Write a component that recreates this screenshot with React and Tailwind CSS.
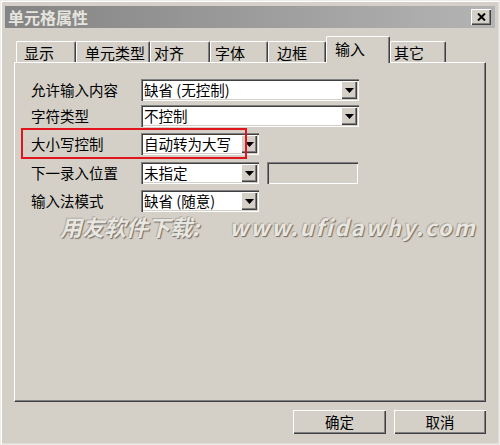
import React from "react";

const FONT = "font-['Noto_Sans_CJK_SC','Noto_Sans',sans-serif]";

function Arrow() {
  return (
    <div className="w-[16px] h-[18px] bg-[#d4d0c8] flex items-center justify-center shadow-[inset_1px_1px_0_#ffffff,inset_-1px_-1px_0_#404040,inset_-2px_-2px_0_#808080]">
      <svg width="9" height="5" viewBox="0 0 9 5">
        <path d="M0 0 H9 L4.5 5 Z" fill="#000" />
      </svg>
    </div>
  );
}

function Combo({ value, wide }) {
  return (
    <div
      className={`${wide ? "w-[218px]" : "w-[118px]"} h-[22px] bg-white flex items-center justify-between pl-[3px] pr-[2px] shadow-[inset_1px_1px_0_#808080,inset_2px_2px_0_#404040,inset_-1px_-1px_0_#ffffff,inset_-2px_-2px_0_#d4d0c8]`}
    >
      <span className="text-[14.5px] leading-none text-black whitespace-nowrap">{value}</span>
      <Arrow />
    </div>
  );
}

function Row({ label, children, className }) {
  return (
    <div className={`flex items-center ${className}`}>
      <span className="w-[110px] text-[14.5px] leading-none text-black whitespace-nowrap">{label}</span>
      {children}
    </div>
  );
}

const tabs = [
  { name: "显示", cls: "w-[60px] pl-[7px]" },
  { name: "单元类型", cls: "w-[74px] pl-[8px]" },
  { name: "对齐", cls: "w-[60px] pl-[3px]" },
  { name: "字体", cls: "w-[58px] pl-[4px]" },
  { name: "边框", cls: "w-[58px] pl-[8px]" },
  { name: "输入", cls: "w-[64px] pl-[8px]", active: true },
  { name: "其它", cls: "w-[56px] pl-[3px]" },
];

export default function App() {
  return (
    <div className={`w-[500px] h-[445px] bg-[#d4d0c8] px-[4px] pt-[5px] ${FONT} border border-[#eeece8] shadow-[inset_1px_1px_0_#ffffff,inset_-1px_-1px_0_#e0ddd6]`}>
      {/* title bar */}
      <div className="h-[22px] flex items-center justify-between pl-[3px] pr-[4px] bg-gradient-to-r from-[#848484] to-[#b4b4b4]">
        <span className="text-[16px] font-bold leading-none text-[#e6e4de]">单元格属性</span>
        <div className="w-[20px] h-[16px] bg-[#d4d0c8] flex items-center justify-center shadow-[inset_1px_1px_0_#ffffff,inset_-1px_-1px_0_#404040,inset_-2px_-2px_0_#808080]">
          <svg width="9" height="8" viewBox="0 0 9 8">
            <path d="M1 0.5 L8 7.5 M8 0.5 L1 7.5" stroke="#000" strokeWidth="2" />
          </svg>
        </div>
      </div>

      {/* tabs */}
      <div className="mt-[8px] ml-[11px] h-[26px] flex items-end relative z-10">
        {tabs.map((t) =>
          t.active ? (
            <div
              key={t.name}
              className={`${t.cls} h-[27px] -mb-[1px] bg-[#d4d0c8] rounded-t-[2px] border-t border-l border-white border-r border-r-[#404040] shadow-[inset_-1px_0_0_#808080] flex items-start pt-[3px] text-[15px] leading-[18px] text-black`}
            >
              {t.name}
            </div>
          ) : (
            <div
              key={t.name}
              className={`${t.cls} h-[21px] bg-[#d4d0c8] rounded-t-[2px] border-t border-l border-white border-r border-r-[#404040] shadow-[inset_-1px_0_0_#808080] flex items-center text-[15px] leading-none text-black`}
            >
              {t.name}
            </div>
          )
        )}
      </div>

      {/* panel */}
      <div className="relative mx-[9px] h-[340px] border-t border-l border-white border-r border-b border-r-[#404040] border-b-[#404040] shadow-[inset_-1px_-1px_0_#808080] pt-[16px] pl-[16px]">
        <Row label="允许输入内容">
          <Combo value="缺省 (无控制)" wide />
        </Row>
        <Row label="字符类型" className="mt-[4px]">
          <Combo value="不控制" wide />
        </Row>
        <Row label="大小写控制" className="mt-[6px]">
          <Combo value="自动转为大写" />
        </Row>
        <Row label="下一录入位置" className="mt-[7px]">
          <Combo value="未指定" />
          <div className="ml-[8px] w-[91px] h-[22px] bg-[#d4d0c8] shadow-[inset_1px_1px_0_#808080,inset_2px_2px_0_#404040,inset_-1px_-1px_0_#ffffff,inset_-2px_-2px_0_#d4d0c8]" />
        </Row>
        <Row label="输入法模式" className="mt-[6px]">
          <Combo value="缺省 (随意)" />
        </Row>

        {/* annotation box */}
        <div className="absolute left-[6px] top-[65px] w-[226px] h-[31px] border-2 border-[#e2141c]" />

        {/* watermark */}
        <div className="absolute left-[45px] top-[152px] flex items-center gap-[30px] text-[22px] italic leading-none text-[#e8e6e0] [text-shadow:1px_1px_1px_#6f6b64,-1px_-1px_0_#b0aca4] whitespace-nowrap">
          <span className="font-bold">用友软件下载:</span>
          <span className="font-bold tracking-[2px]">www.ufidawhy.com</span>
        </div>
      </div>

      {/* buttons */}
      <div className="mt-[8px] mr-[9px] flex justify-end gap-[8px]">
        <button className="w-[93px] h-[24px] bg-[#d4d0c8] text-[14.5px] leading-none text-black shadow-[inset_1px_1px_0_#ffffff,inset_-1px_-1px_0_#404040,inset_-2px_-2px_0_#808080]">
          确定
        </button>
        <button className="w-[92px] h-[24px] bg-[#d4d0c8] text-[14.5px] leading-none text-black shadow-[inset_1px_1px_0_#ffffff,inset_-1px_-1px_0_#404040,inset_-2px_-2px_0_#808080]">
          取消
        </button>
      </div>
    </div>
  );
}
